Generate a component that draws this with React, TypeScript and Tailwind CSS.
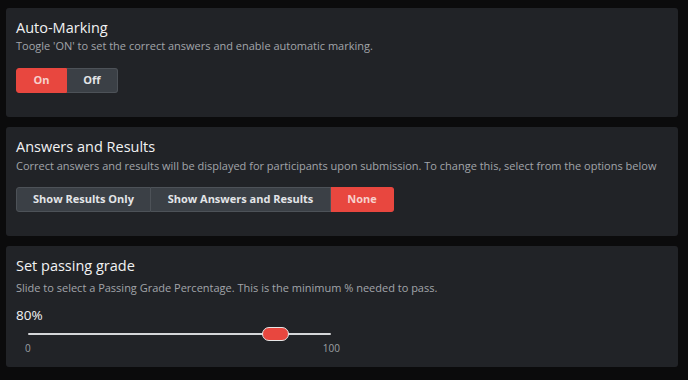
import { useState } from "react";

const font = { fontFamily: '"Open Sans", "Noto Sans", sans-serif' };

type CardProps = {
	title: string;
	description: string;
	gap: string;
	children: React.ReactNode;
};

function Card({ title, description, gap, children }: CardProps) {
	return (
		<section className="rounded-[3px] bg-[#212327] px-[10px] pt-[10px]">
			<h2 className="text-[14.5px] font-medium leading-[19px] text-[#f1f2f3]">{title}</h2>
			<p className={`${gap} text-[11px] leading-[15px] text-[#a2a5aa]`}>{description}</p>
			{children}
		</section>
	);
}

export default function App() {
	const [marking, setMarking] = useState("On");
	const [results, setResults] = useState("None");
	const grade = 80;

	const segment = (active: boolean) =>
		active
			? "bg-[#e8473f] border-[#e8473f] text-[#f7d0cc]"
			: "bg-[#3b4046] border-[#4d5258] text-[#e3e5e8]";

	return (
		<div className="min-h-[380px] bg-[#0b0b0c] pt-[8px] pl-[6px] pr-[10px] pb-[13px]" style={font}>
			<div className="flex flex-col gap-[10px]">
				<Card
					title="Auto-Marking"
					gap="mt-[1px]"
					description="Toogle 'ON' to set the correct answers and enable automatic marking."
				>
					<div className="mt-[15px] mb-[24px] flex">
						{["On", "Off"].map((opt, i) => (
							<button
								key={opt}
								onClick={() => setMarking(opt)}
								className={`h-[25px] w-[51px] border text-[11px] font-bold ${segment(marking === opt)} ${
									i === 0 ? "rounded-l-[3px]" : "rounded-r-[3px] border-l-0"
								}`}
							>
								{opt}
							</button>
						))}
					</div>
				</Card>

				<Card
					title="Answers and Results"
					gap="mt-[2px]"
					description="Correct answers and results will be displayed for participants upon submission. To change this, select from the options below"
				>
					<div className="mt-[14px] mb-[24px] flex">
						{[
							{ label: "Show Results Only", w: "w-[135px]" },
							{ label: "Show Answers and Results", w: "w-[180px]" },
							{ label: "None", w: "w-[63px]" },
						].map((opt, i, arr) => (
							<button
								key={opt.label}
								onClick={() => setResults(opt.label)}
								className={`h-[25px] ${opt.w} border text-[11px] font-bold ${segment(results === opt.label)} ${
									i === 0 ? "rounded-l-[3px]" : "border-l-0"
								} ${i === arr.length - 1 ? "rounded-r-[3px]" : ""} ${
									i > 0 && results !== opt.label ? "border-l border-l-[#565b61]" : ""
								}`}
							>
								{opt.label}
							</button>
						))}
					</div>
				</Card>

				<Card
					title="Set passing grade"
					gap="mt-[5px]"
					description="Slide to select a Passing Grade Percentage. This is the minimum % needed to pass."
				>
					<div className="mt-[11px] text-[13.5px] font-medium leading-[18px] text-[#f1f2f3]">{grade}%</div>
					<div className="mt-[3px] pb-[12px]">
						<div className="relative ml-[12px] h-[14px] w-[303px]">
							<div className="absolute left-0 right-0 top-[6px] h-[2px] rounded-full bg-[#d4d6d9]" />
							<div
								className="absolute top-0 h-[14px] w-[27px] rounded-full border-[1.5px] border-[#e6e6e6] bg-[#e8473f]"
								style={{ left: `calc(${grade}% - 8px)` }}
							/>
						</div>
						<div className="ml-[9px] flex w-[315px] justify-between text-[10px] leading-[14px] text-[#9ca0a5]">
							<span>0</span>
							<span>100</span>
						</div>
					</div>
				</Card>
			</div>
		</div>
	);
}
